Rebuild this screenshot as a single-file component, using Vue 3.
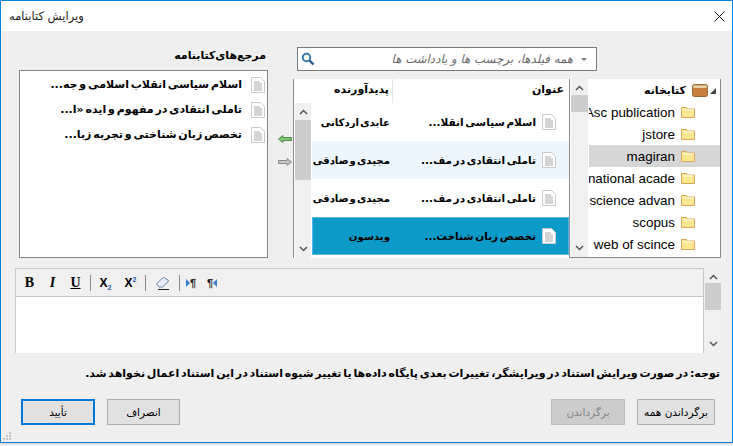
<script setup>
const refs = [
  'اسلام سیاسی انقلاب اسلامی و جه...',
  'تاملی انتقادی در مفهوم و ایده «ا...',
  'تخصص زبان شناختی و تجربه زبا...',
]
const rows = [
  { t: 'اسلام سیاسی انقلا...', a: 'عابدی اردکانی', cls: '' },
  { t: 'تاملی انتقادی در مف...', a: 'مجیدی و صادقی', cls: 'hover' },
  { t: 'تاملی انتقادی در مف...', a: 'مجیدی و صادقی', cls: '' },
  { t: 'تخصص زبان شناخت...', a: 'ویدسون', cls: 'sel' },
]
const folders = ['Asc publication', 'jstore', 'magiran', 'national acade', 'science advan', 'scopus', 'web of scince']
</script>

<template>
  <div class="win">
    <header class="title">
      <span class="title-text" dir="rtl">ویرایش کتابنامه</span>
      <svg class="close" width="11" height="11" viewBox="0 0 11 11"><path d="M.5.5l10 10M10.500.5l-10 10" stroke="#111" fill="none" /></svg>
    </header>

    <main class="body">
      <section class="top">
        <div class="refs">
          <div class="refs-label" dir="rtl">مرجع های کتابنامه</div>
          <ul class="refs-list">
            <li v-for="r in refs" :key="r" class="ref-item">
              <svg class="doc" width="14" height="16" viewBox="0 0 14 16"><path d="M.5.5h9l4 4v11H.5z" fill="#fff" stroke="#c9c9c9" /><path d="M3 5h6M3 7h8M3 9h8M3 11h8M3 13h8" stroke="#aaa" /></svg>
              <span class="ref-text" dir="rtl">{{ r }}</span>
            </li>
          </ul>
        </div>

        <div class="arrows">
          <svg width="14" height="8" viewBox="0 0 14 8"><path d="M.5 4L5 .5v2h8.500v3H5v2z" fill="#7cc576" stroke="#4f8f4a" /></svg>
          <svg width="14" height="8" viewBox="0 0 14 8"><path d="M13.500 4L9 .5v2H.5v3H9v2z" fill="#c6c6c6" stroke="#8a8a8a" /></svg>
        </div>

        <div class="main-col">
          <div class="search">
            <svg class="lens" width="14" height="14" viewBox="0 0 14 14"><circle cx="5.500" cy="5.500" r="3.800" fill="#fff" stroke="#2b6fa8" stroke-width="1.800" /><path d="M8.500 8.500l4 4" stroke="#24598a" stroke-width="2.400" /></svg>
            <span class="search-text" dir="rtl">همه فیلدها، برچسب ها و یادداشت ها</span>
            <span class="caret"></span>
          </div>

          <div class="panels">
            <div class="table">
              <div class="vscroll inner">
                <svg class="chev" width="9" height="6" viewBox="0 0 9 6"><path d="M1 5l3.500-3.500L8 5" fill="none" stroke="#555" stroke-width="1.500" /></svg>
                <div class="thumb inner-thumb"></div>
                <svg class="chev end" width="9" height="6" viewBox="0 0 9 6"><path d="M1 1l3.500 3.500L8 1" fill="none" stroke="#555" stroke-width="1.500" /></svg>
              </div>
              <div class="table-main" dir="rtl">
                <div class="thead">
                  <div class="th th-title">عنوان</div>
                  <div class="th th-author">پدیدآورنده</div>
                </div>
                <div v-for="(row, i) in rows" :key="i" class="tr" :class="row.cls">
                  <div class="td-title">
                    <svg class="doc" width="14" height="16" viewBox="0 0 14 16"><path d="M.5.5h9l4 4v11H.5z" fill="#fff" stroke="#c9c9c9" /><path d="M3 5h6M3 7h8M3 9h8M3 11h8M3 13h8" stroke="#aaa" /></svg>
                    <span>{{ row.t }}</span>
                  </div>
                  <div class="td-author">{{ row.a }}</div>
                </div>
              </div>
            </div>

            <div class="tree">
              <div class="vscroll outer">
                <svg class="chev" width="9" height="6" viewBox="0 0 9 6"><path d="M1 5l3.500-3.500L8 5" fill="none" stroke="#555" stroke-width="1.500" /></svg>
                <div class="thumb outer-thumb"></div>
                <svg class="chev end" width="9" height="6" viewBox="0 0 9 6"><path d="M1 1l3.500 3.500L8 1" fill="none" stroke="#555" stroke-width="1.500" /></svg>
              </div>
              <div class="tree-main">
                <div class="tree-root">
                  <span class="root-text" dir="rtl">کتابخانه</span>
                  <svg class="nos" width="16" height="13" viewBox="0 0 16 13"><rect x=".5" y=".5" width="15" height="12" rx="2" fill="#c9803f" stroke="#96683a" /><rect x="1.500" y="1.500" width="13" height="2.500" fill="#e8d3a6" /></svg>
                  <span class="tri"></span>
                </div>
                <div v-for="f in folders" :key="f" class="tree-row" :class="{ picked: f === 'magiran' }">
                  <span class="tree-text">{{ f }}</span>
                  <svg class="nos" width="14" height="12" viewBox="0 0 14 12"><path d="M.5 1.500h5l1 1.500h7v8.500H.5z" fill="#fbe58f" stroke="#dca95c" /><path d="M1.500 4h11" stroke="#fff6cf" stroke-width="1.500" /></svg>
                </div>
              </div>
            </div>
          </div>
        </div>
      </section>

      <section class="editor-row">
        <div class="editor">
          <div class="toolbar">
            <b class="tb tb-b">B</b>
            <i class="tb tb-i">I</i>
            <u class="tb tb-u">U</u>
            <span class="sep"></span>
            <span class="tb tb-x">X<sub>2</sub></span>
            <span class="tb tb-x wide">X<sup>2</sup></span>
            <span class="sep"></span>
            <svg class="eraser" width="15" height="14" viewBox="0 0 15 14"><path d="M1.500 8l6-6a1.500 1.500 0 0 1 2 0l3.500 2a1.500 1.500 0 0 1 0 2l-5.500 5H4z" fill="#e6edf8" stroke="#6f86a8" /><path d="M3 13.500h11" stroke="#222" /></svg>
            <span class="sep last"></span>
            <span class="para"><i class="tri-r"></i>¶</span>
            <span class="para">¶<i class="tri-l"></i></span>
          </div>
          <div class="editor-area"></div>
        </div>
        <div class="vscroll ed-scroll">
          <svg class="chev" width="9" height="6" viewBox="0 0 9 6"><path d="M1 5l3.500-3.500L8 5" fill="none" stroke="#555" stroke-width="1.500" /></svg>
          <div class="thumb ed-thumb"></div>
          <svg class="chev end" width="9" height="6" viewBox="0 0 9 6"><path d="M1 1l3.500 3.500L8 1" fill="none" stroke="#555" stroke-width="1.500" /></svg>
        </div>
      </section>

      <p class="note" dir="rtl">توجه: در صورت ویرایش استناد در ویرایشگر، تغییرات بعدی پایگاه داده‌ها یا تغییر شیوه استناد در این استناد اعمال نخواهد شد.</p>

      <footer class="buttons">
        <button class="btn ok" dir="rtl">تأیید</button>
        <button class="btn cancel" dir="rtl">انصراف</button>
        <span class="spacer"></span>
        <button class="btn disabled" dir="rtl">برگرداندن</button>
        <button class="btn all" dir="rtl">برگرداندن همه</button>
      </footer>
      <svg class="grip" width="9" height="9" viewBox="0 0 9 9"><path d="M6 0h2v2H6zM3 3h2v2H3zM6 3h2v2H6zM0 6h2v2H0zM3 6h2v2H3zM6 6h2v2H6z" fill="#c4c4c4" /></svg>
    </main>
    <div class="shadow"></div>
  </div>
</template>

<style>
html, body { margin: 0; background: #fff; }
</style>

<style scoped>
* { box-sizing: border-box; }
.win {
  width: 733px; height: 446px; display: flex; flex-direction: column;
  font-family: "DejaVu Sans", "Liberation Sans", sans-serif; color: #000; overflow: hidden;
}
.title {
  height: 31px; flex: none; display: flex; align-items: center; justify-content: space-between;
  background: #fff; border-top: 1px solid #0a84d8; border-left: 1px solid #0a84d8; border-right: 1px solid #0a84d8;
  padding: 0 7px 0 8px;
}
.title-text { font-size: 11.500px; color: #222; }
.body {
  flex: 1; position: relative; background: #efefef; padding: 16px 11px 0 14px;
  border-left: 1px solid #0a84d8; border-right: 1px solid #0a84d8; border-bottom: 1px solid #0a84d8;
  display: flex; flex-direction: column;
}
.top { display: flex; margin-left: 4px; height: 211px; flex: none; }
.refs { width: 249px; flex: none; display: flex; flex-direction: column; }
.refs-label { height: 23px; padding: 2px 2px 0 0; font-size: 11px; font-weight: 700; text-align: right; word-spacing: -4px; }
.refs-list {
  list-style: none; margin: 0; padding: 1px 0 0; flex: 1; background: #fff; border: 1px solid #828790;
}
.ref-item { height: 25px; display: flex; flex-direction: row-reverse; align-items: center; padding-right: 2px; gap: 9px; }
.ref-text { font-size: 11px; font-weight: 700; white-space: nowrap; word-spacing: -2px; }
.doc { flex: none; }
.nos { flex: none; }
.arrows { width: 25px; flex: none; display: flex; flex-direction: column; align-items: center; gap: 15px; padding: 88px 0 0 9px; }
.main-col { width: 428px; flex: none; }
.search {
  width: 300px; height: 24px; margin-left: 4px; background: #fff; border: 1px solid #7a7a7a;
  display: flex; align-items: center; padding: 0 9px 0 3px;
}
.lens { flex: none; }
.search-text { flex: 1; text-align: right; font-size: 11.800px; font-style: italic; color: #6b6b6b; padding-right: 8px; white-space: nowrap; }
.caret { border: 3px solid transparent; border-top: 3px solid #777; margin-top: 3px; }
.panels { display: flex; height: 179px; margin-top: 8px; }
.table {
  width: 277px; flex: none; background: #fff; display: flex; position: relative; height: 179px;
  border-left: 1px solid #8b8b8b; border-right: 1px solid #8b8b8b;
}
.vscroll { background: #f0f0f0; display: flex; flex-direction: column; align-items: center; flex: none; }
.chev { flex: none; margin-top: 6px; }
.chev.end { margin-top: auto; margin-bottom: 6px; }
.thumb { background: #cdcdcd; align-self: stretch; flex: none; }
.inner { width: 16px; margin: 24px 1px 0 1px; }
.inner-thumb { height: 60px; margin-top: 5px; }
.table-main { flex: 1; min-width: 0; }
.thead { height: 24px; display: flex; }
.th { font-size: 11px; font-weight: 700; padding: 4px 5px 0 0; }
.th-title { width: 177px; flex: none; border-left: 1px solid #e5e5e5; }
.th-author { flex: 1; padding-right: 3px; }
.tr { height: 38px; display: flex; align-items: center; font-size: 10.500px; font-weight: 700; white-space: nowrap; word-spacing: -2px; }
.tr.hover { background: #eef6fd; }
.tr.sel { background: #0c9ac8; outline: 1px solid #55b5ec; outline-offset: -1px; height: 38px; }
.td-title { width: 177px; flex: none; display: flex; align-items: center; gap: 6px; padding-right: 13px; }
.td-author { flex: 1; min-width: 0; overflow: hidden; padding-right: 2px; font-size: 10.200px; word-spacing: -2.500px; }
.tree {
  width: 151px; flex: none; height: 179px; display: flex; background: #fff;
  border-right: 1px solid #8b8b8b; border-bottom: 1px solid #8b8b8b;
}
.outer { width: 17px; margin-left: 1px; height: 178px; }
.outer-thumb { height: 17px; margin-top: 4px; }
.tree-main { flex: 1; min-width: 0; overflow: hidden; padding-top: 1px; }
.tree-root { height: 21px; display: flex; align-items: center; justify-content: flex-end; padding-right: 4px; }
.root-text { font-size: 11px; font-weight: 700; margin-right: 6px; }
.tri { width: 0; height: 0; border-left: 6px solid transparent; border-bottom: 6px solid #444; margin-left: 2px; }
.tree-row { height: 22px; display: flex; align-items: center; justify-content: flex-end; padding-right: 25px; margin: 0 0 0 1px; white-space: nowrap; overflow: hidden; }
.tree-row.picked { background: #d6d6d6; }
.tree-text { font-family: "Liberation Sans", sans-serif; font-size: 13.400px; margin-right: 6px; }
.editor-row { display: flex; height: 85px; margin-top: 10px; flex: none; }
.editor { width: 689px; flex: none; display: flex; flex-direction: column; border-left: 1px solid #c8c8c8; border-top: 1px solid #c8c8c8; border-right: 1px solid #c8c8c8; }
.toolbar { height: 28px; flex: none; display: flex; align-items: center; padding-left: 2px; background: #f0f0f0; border-bottom: 1px solid #c8c8c8; }
.tb { width: 23px; text-align: center; font-family: "Liberation Serif", serif; font-size: 14px; font-weight: 700; color: #000; }
.tb-x { font-family: "Liberation Sans", sans-serif; font-size: 12px; }
.tb-x.wide { width: 25px; padding-left: 2px; }
.tb-x sub, .tb-x sup { font-size: 7px; color: #2a5db0; line-height: 0; }
.sep { width: 1px; height: 16px; background: #8a8a8a; margin: 0 3px; flex: none; }
.sep.last { margin-right: 1px; }
.eraser { margin: 0 6px 0 6px; flex: none; }
.para { width: 20px; text-align: center; font-size: 11px; font-weight: 700; font-family: "Liberation Sans", sans-serif; display: flex; align-items: center; justify-content: center; color: #222; margin-right: 1px; }
.tri-r { border: 4px solid transparent; border-left: 4px solid #3a7bd0; border-right: 0; }
.tri-l { border: 4px solid transparent; border-right: 4px solid #3a7bd0; border-left: 0; }
.editor-area { flex: 1; background: #fff; }
.ed-scroll { width: 16px; margin-left: 1px; }
.ed-thumb { height: 27px; margin-top: 3px; }
.note { margin: 14px 1px 0 0; height: 14px; font-size: 11px; line-height: 14px; font-weight: 700; white-space: nowrap; text-align: right; word-spacing: -2px; }
.buttons { display: flex; margin-top: 18px; padding-left: 6px; height: 26px; flex: none; }
.btn { font-family: inherit; font-size: 10.500px; height: 26px; background: #e1e1e1; border: 1px solid #adadad; padding: 0; color: #000; }
.ok { width: 74px; border: 2px solid #0078d7; }
.cancel { width: 73px; margin-left: 12px; }
.spacer { flex: 1; }
.disabled { width: 74px; background: #ccc; border-color: #bfbfbf; color: #838383; }
.all { width: 78px; margin-left: 12px; margin-right: 6px; }
.grip { position: absolute; left: 2px; bottom: 1px; }
.shadow { height: 3px; flex: none; background: linear-gradient(#cfcfcf, #fff); }
</style>
